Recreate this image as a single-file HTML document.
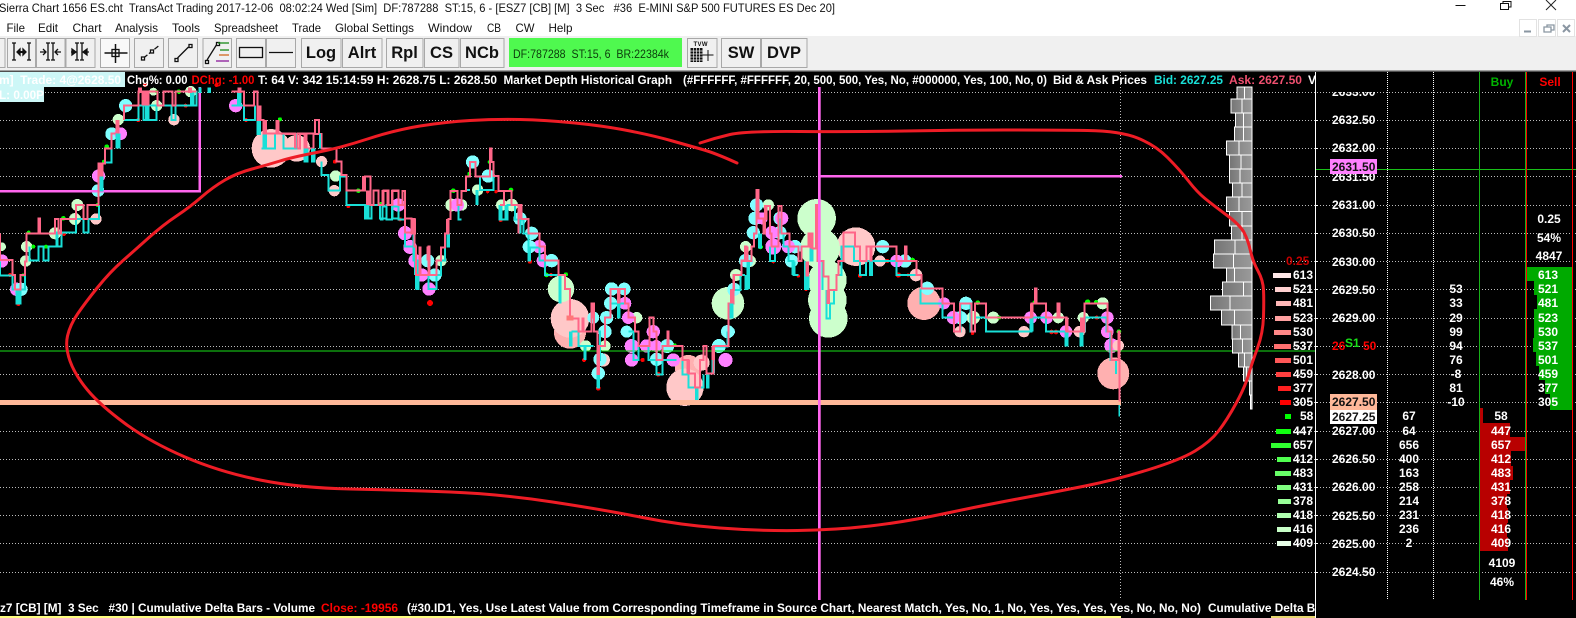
<!DOCTYPE html>
<html><head><meta charset="utf-8"><title>Sierra Chart</title>
<style>
html,body{margin:0;padding:0;background:#000;width:1576px;height:618px;overflow:hidden}
svg{position:absolute;left:0;top:0;display:block}
text{font-family:"Liberation Sans",sans-serif;white-space:pre}
.b{font-weight:bold;font-size:12px;fill:#fff}
.m{text-anchor:middle}
.t{font-size:12px;fill:#111}
.k{font-weight:bold;font-size:16.5px;fill:#111;text-anchor:middle}
.btn{fill:#f0f0f0;stroke:#a8a8a8;stroke-width:1}
.p{fill:none;stroke:#ff6688;stroke-width:6}
.c{fill:none;stroke:#19e0d8;stroke-width:6}
.cy circle{fill:#80ffff}.mg circle{fill:#ff80ff}.gr circle{fill:#ccffcc}.pk circle{fill:#ffc8c8}.pd circle{fill:#ffb0b0}
.rd circle{fill:#f00}.gd circle{fill:#0f0}
</style></head><body>
<svg width="1576" height="618" viewBox="0 0 1576 618" xmlns="http://www.w3.org/2000/svg">
<defs>
<clipPath id="cl"><rect x="0" y="72" width="1315" height="546"/></clipPath>
<clipPath id="ax"><rect x="1316" y="92" width="100" height="40"/></clipPath>
<linearGradient id="g1" x1="0" x2="1"><stop offset="0" stop-color="#757575"/><stop offset="1" stop-color="#8a8a8a"/></linearGradient>
<linearGradient id="g2" x1="0" x2="1"><stop offset="0" stop-color="#8a8a8a"/><stop offset="1" stop-color="#9a9a9a"/></linearGradient>
</defs>

<rect x="0" y="0" width="1576" height="36" fill="#fff"/>
<rect x="0" y="36" width="1576" height="34" fill="#f0f0f0"/>
<rect x="0" y="70" width="1576" height="1.5" fill="#a0a0a0"/>
<rect x="0" y="71.5" width="1576" height="547" fill="#000"/>

<!-- title -->
<text class="t" x="-1" y="12" textLength="836" lengthAdjust="spacingAndGlyphs">Sierra Chart 1656 ES.cht  TransAct Trading 2017-12-06  08:02:24 Wed [Sim]  DF:787288  ST:15, 6 - [ESZ7 [CB] [M]  3 Sec   #36  E-MINI S&amp;P 500 FUTURES ES Dec 20]</text>
<path d="M1455.500 5.500H1465.500" fill="none" stroke="#111"/>
<path d="M1503 3.500V1.500H1511V7H1509" fill="none" stroke="#111"/>
<rect x="1500.500" y="3.500" width="8" height="6" fill="#fff" stroke="#111"/>
<path d="M1546 0L1556 10M1556 0L1546 10" stroke="#222" fill="none"/>
<g fill="#fff" stroke="#e2e2e2"><rect x="1519.500" y="19.500" width="17" height="17"/><rect x="1538.500" y="19.500" width="17" height="17"/><rect x="1557.500" y="19.500" width="17" height="17"/></g>
<path d="M1524 31.500H1531" stroke="#8a96a2" stroke-width="2"/>
<path d="M1544 27h7v5h-7zM1547 27v-2h7v5h-3" fill="none" stroke="#8a96a2" stroke-width="1.300"/>
<path d="M1563 25l7 7M1570 25l-7 7" stroke="#8a96a2" stroke-width="2"/>

<!-- menu -->
<text class="t" x="6.500" y="32" textLength="18.500" lengthAdjust="spacingAndGlyphs">File</text>
<text class="t" x="38" y="32" textLength="20" lengthAdjust="spacingAndGlyphs">Edit</text>
<text class="t" x="72.500" y="32" textLength="29" lengthAdjust="spacingAndGlyphs">Chart</text>
<text class="t" x="115" y="32" textLength="43" lengthAdjust="spacingAndGlyphs">Analysis</text>
<text class="t" x="172" y="32" textLength="28" lengthAdjust="spacingAndGlyphs">Tools</text>
<text class="t" x="214" y="32" textLength="64" lengthAdjust="spacingAndGlyphs">Spreadsheet</text>
<text class="t" x="292" y="32" textLength="29" lengthAdjust="spacingAndGlyphs">Trade</text>
<text class="t" x="335" y="32" textLength="79" lengthAdjust="spacingAndGlyphs">Global Settings</text>
<text class="t" x="428" y="32" textLength="44" lengthAdjust="spacingAndGlyphs">Window</text>
<text class="t" x="487" y="32" textLength="14" lengthAdjust="spacingAndGlyphs">CB</text>
<text class="t" x="515.500" y="32" textLength="19" lengthAdjust="spacingAndGlyphs">CW</text>
<text class="t" x="548.500" y="32" textLength="24" lengthAdjust="spacingAndGlyphs">Help</text>

<!-- toolbar buttons -->
<g class="btn">
<rect x="-4.500" y="38.500" width="9.500" height="29"/>
<rect x="7.500" y="38.500" width="28" height="29"/><rect x="36.500" y="38.500" width="28.500" height="29"/><rect x="66" y="38.500" width="29" height="29"/>
<rect x="100.500" y="38.500" width="29" height="29" style="fill:#f8f8f8"/>
<rect x="134.500" y="38.500" width="29" height="29"/><rect x="168.500" y="38.500" width="29" height="29"/><rect x="203" y="38.500" width="28.500" height="29"/>
<rect x="236.500" y="38.500" width="29" height="29"/><rect x="266.500" y="38.500" width="29" height="29"/>
<rect x="301.500" y="38.500" width="39.500" height="29"/><rect x="342.500" y="38.500" width="39.500" height="29"/>
<rect x="386.500" y="38.500" width="36.500" height="29"/><rect x="424.500" y="38.500" width="34.500" height="29"/><rect x="460.500" y="38.500" width="43.500" height="29"/>
<rect x="687.500" y="38.500" width="29.500" height="29"/><rect x="721.500" y="38.500" width="39" height="29"/><rect x="761.500" y="38.500" width="45.500" height="29"/>
</g>
<rect x="509" y="38" width="173" height="29" fill="#4ff94f"/>
<text x="513" y="58" font-size="12" fill="#0c3c0c" textLength="156" lengthAdjust="spacingAndGlyphs">DF:787288  ST:15, 6  BR:22384k</text>
<!-- icons -->
<g fill="none" stroke="#111" stroke-width="1.300">
<path d="M14 43V60M12 60h4M12 43h4M29 43V60M27 60h4M27 43h4"/>
<path d="M17 52H26" stroke-width="2"/><path d="M17 52l3-3v6zM26 52l-3-3v6z" fill="#111"/>
<g transform="translate(1,0)"><path d="M47 43V60M52 43V60M45 60h4M50 60h4M45 43h4M50 43h4M39 52h6M60 52h-6M42 49l3 3-3 3M57 49l-3 3 3 3"/></g>
<g transform="translate(1,0)"><path d="M76 43V60M81 43V60M74 60h4M79 60h4M74 43h4M79 43h4M70 52h6M88 52h-6"/><path d="M75 52l-4-3v6zM82 52l4-3v6z" fill="#111"/></g>
<g transform="translate(1.500,0)"><path d="M103 53H126M114 44V63" stroke-width="1.500"/><rect x="110.500" y="49.500" width="7" height="7"/></g>
<g transform="translate(2.500,0)"><path d="M141 58L156 46" stroke-dasharray="5 2"/><rect x="139" y="57" width="3" height="3" fill="#fff"/><rect x="148" y="50" width="3" height="3" fill="#fff"/></g>
<g transform="translate(2.500,0)"><path d="M175 58L186 47"/><rect x="172.500" y="58.500" width="3" height="3" fill="#fff"/><rect x="186.500" y="44.500" width="3" height="3" fill="#fff"/></g>
<g transform="translate(3,0)"><path d="M204 60L214 44"/><rect x="202.500" y="60.500" width="3" height="3" fill="#fff"/><rect x="213.500" y="42.500" width="3" height="3" fill="#fff"/>
<path d="M215 43H226" stroke="#1a8a1a"/><path d="M217 50H226" stroke="#1a8a1a"/><path d="M216 55H226" stroke="#d2691e"/><path d="M213 61H226" stroke="#8a1a9a"/></g>
<rect x="239.500" y="47.500" width="23" height="10"/>
<path d="M269 52.500H293"/>
</g>
<g fill="#111" transform="translate(2.500,0)">
<text x="691" y="46" font-size="6" font-weight="bold" fill="#111" textLength="14">TVW</text>
<rect x="688" y="48" width="12" height="14"/>
<path d="M700 55H711M705.500 50V61" stroke="#111" fill="none"/>
<path d="M688 51h12M688 54h12M688 57h12M688 60h12M691 48v14M694 48v14M697 48v14" stroke="#f0f0f0" stroke-width=".7" fill="none"/>
</g>
<text class="k" x="321" y="58">Log</text><text class="k" x="362" y="58">Alrt</text><text class="k" x="404.500" y="58">Rpl</text><text class="k" x="441.500" y="58">CS</text><text class="k" x="482" y="58">NCb</text><text class="k" x="741" y="58">SW</text><text class="k" x="784" y="58">DVP</text>

<!-- grid -->
<g stroke="#bcbcbc" stroke-dasharray="1 2" shape-rendering="crispEdges" fill="none">
<path d="M0 92.500H1576M0 120.500H1576M0 148.500H1576M0 176.500H1576M0 205.500H1576M0 233.500H1576M0 261.500H1576M0 289.500H1576M0 318.500H1576M0 346.500H1576M0 374.500H1576M0 402.500H1576M0 431.500H1576M0 459.500H1576M0 487.500H1576M0 515.500H1576M0 543.500H1576M0 572.500H1576"/>
<path d="M1120.500 72V600"/>
<path d="M1387.500 72V599M1433.500 72V599" stroke="#fff" stroke-dasharray="1 1"/>
</g>

<!-- bubbles z12/z6 -->
<g shape-rendering="crispEdges">
<g transform="translate(0,130) scale(.3333)">
<g class="gr"><circle cx="232" cy="225" r="18"/><circle cx="225" cy="267" r="18"/><circle cx="165" cy="310" r="18"/><circle cx="80" cy="350" r="17"/><circle cx="77" cy="393" r="17"/><circle cx="5" cy="350" r="13"/><circle cx="1007" cy="138" r="17"/></g>
<g class="mg"><circle cx="5" cy="393" r="20"/><circle cx="50" cy="478" r="20"/><circle cx="296" cy="138" r="20"/><circle cx="1195" cy="225" r="20"/><circle cx="1215" cy="310" r="21"/><circle cx="1230" cy="352" r="20"/><circle cx="1245" cy="393" r="20"/></g>
<g class="cy"><circle cx="63" cy="478" r="20"/><circle cx="294" cy="182" r="19"/><circle cx="335" cy="12" r="19"/></g>
<g class="pk"><circle cx="288" cy="267" r="17"/><circle cx="1003" cy="182" r="17"/><circle cx="965" cy="95" r="17"/><circle cx="813" cy="55" r="58"/><circle cx="890" cy="55" r="40"/></g>
</g>
<g transform="translate(0,85) scale(.3333)">
<g class="cy"><circle cx="377" cy="62" r="20"/><circle cx="335" cy="146" r="19"/></g>
<g class="mg"><circle cx="362" cy="146" r="19"/><circle cx="707" cy="62" r="20"/></g>
<g class="gr"><circle cx="355" cy="104" r="17"/><circle cx="470" cy="62" r="17"/><circle cx="460" cy="20" r="12"/><circle cx="572" cy="20" r="17"/></g>
<g class="pk"><circle cx="522" cy="104" r="17"/></g>
</g>
<g transform="translate(380,140) scale(.3333)">
<g class="pd"><circle cx="570" cy="578" r="48"/><circle cx="925" cy="685" r="40"/></g>
<g class="pk"><circle cx="570" cy="535" r="58"/><circle cx="915" cy="742" r="56"/><circle cx="670" cy="660" r="20"/><circle cx="965" cy="668" r="24"/></g>
<g class="gr"><circle cx="543" cy="447" r="40"/><circle cx="1044" cy="490" r="49"/><circle cx="215" cy="195" r="19"/><circle cx="245" cy="195" r="17"/><circle cx="183" cy="362" r="17"/><circle cx="293" cy="150" r="17"/><circle cx="395" cy="195" r="19"/><circle cx="365" cy="195" r="17"/><circle cx="770" cy="533" r="17"/><circle cx="675" cy="618" r="17"/><circle cx="617" cy="618" r="17"/><circle cx="1097" cy="320" r="17"/><circle cx="1068" cy="405" r="17"/></g>
<g class="mg"><circle cx="55" cy="195" r="20"/><circle cx="232" cy="195" r="20"/><circle cx="75" cy="278" r="20"/><circle cx="90" cy="320" r="20"/><circle cx="105" cy="362" r="20"/><circle cx="125" cy="405" r="20"/><circle cx="147" cy="447" r="20"/><circle cx="478" cy="320" r="20"/><circle cx="490" cy="362" r="20"/><circle cx="735" cy="490" r="19"/><circle cx="745" cy="533" r="19"/><circle cx="820" cy="575" r="20"/><circle cx="755" cy="618" r="21"/><circle cx="755" cy="660" r="20"/><circle cx="800" cy="618" r="20"/><circle cx="880" cy="660" r="20"/><circle cx="1037" cy="660" r="21"/><circle cx="829" cy="618" r="18"/></g>
<g class="cy"><circle cx="278" cy="66" r="20"/><circle cx="325" cy="108" r="20"/><circle cx="420" cy="236" r="20"/><circle cx="455" cy="280" r="20"/><circle cx="448" cy="320" r="20"/><circle cx="515" cy="362" r="20"/><circle cx="655" cy="700" r="20"/><circle cx="660" cy="658" r="20"/><circle cx="680" cy="533" r="20"/><circle cx="675" cy="575" r="20"/><circle cx="695" cy="447" r="20"/><circle cx="733" cy="447" r="19"/><circle cx="692" cy="490" r="20"/><circle cx="1043" cy="575" r="20"/><circle cx="1017" cy="618" r="21"/><circle cx="862" cy="618" r="21"/><circle cx="830" cy="658" r="20"/><circle cx="740" cy="575" r="18"/><circle cx="640" cy="533" r="18"/><circle cx="143" cy="362" r="20"/><circle cx="165" cy="405" r="20"/><circle cx="1062" cy="448" r="20"/><circle cx="1097" cy="362" r="20"/></g>
</g>
<g transform="translate(730,180) scale(.3333)">
<g class="pk"><circle cx="378" cy="200" r="58"/></g>
<g class="gr"><circle cx="260" cy="115" r="58"/><circle cx="270" cy="205" r="60"/><circle cx="292" cy="300" r="58"/><circle cx="292" cy="360" r="58"/><circle cx="295" cy="415" r="58"/><circle cx="115" cy="75" r="17"/><circle cx="47" cy="200" r="17"/><circle cx="18" cy="285" r="18"/><circle cx="60" cy="243" r="18"/><circle cx="730" cy="413" r="20"/><circle cx="790" cy="413" r="18"/><circle cx="985" cy="413" r="17"/><circle cx="1060" cy="413" r="17"/><circle cx="1118" cy="370" r="18"/></g>
<g class="pd"><circle cx="582" cy="370" r="50"/><circle cx="1150" cy="580" r="48"/></g>
<g class="cy"><circle cx="80" cy="75" r="20"/><circle cx="75" cy="115" r="20"/><circle cx="70" cy="158" r="20"/><circle cx="150" cy="158" r="20"/><circle cx="150" cy="115" r="20"/><circle cx="50" cy="243" r="20"/><circle cx="195" cy="200" r="20"/><circle cx="185" cy="243" r="20"/><circle cx="458" cy="200" r="20"/><circle cx="525" cy="243" r="20"/><circle cx="592" cy="325" r="20"/><circle cx="708" cy="370" r="20"/><circle cx="692" cy="413" r="20"/><circle cx="0" cy="455" r="15"/><circle cx="10" cy="330" r="18"/></g>
<g class="mg"><circle cx="155" cy="115" r="20"/><circle cx="125" cy="158" r="20"/><circle cx="130" cy="200" r="24"/><circle cx="175" cy="200" r="20"/><circle cx="500" cy="243" r="19"/><circle cx="642" cy="370" r="18"/><circle cx="670" cy="413" r="20"/><circle cx="902" cy="413" r="19"/><circle cx="950" cy="413" r="19"/><circle cx="1008" cy="455" r="19"/><circle cx="1132" cy="413" r="19"/><circle cx="1132" cy="455" r="19"/><circle cx="1145" cy="497" r="22"/><circle cx="0" cy="540" r="8"/><circle cx="95" cy="115" r="18"/></g>
<g class="pk"><circle cx="450" cy="243" r="17"/><circle cx="558" cy="285" r="19"/><circle cx="690" cy="455" r="17"/><circle cx="882" cy="455" r="17"/><circle cx="1048" cy="455" r="17"/><circle cx="1165" cy="497" r="17"/></g>
</g>

<!-- salmon level + pink levels -->
<rect x="0" y="400" width="1121" height="5" fill="#ffb899"/>
<path d="M0 191H199.500V87" fill="none" stroke="#ff66ee" stroke-width="2.500"/>
<rect x="820" y="175" width="302" height="2.500" fill="#ff66ee"/>
<rect x="0" y="350.500" width="1315" height="1" fill="#18e018"/>

<!-- step lines -->
<g transform="translate(0,130) scale(.3333)">
<g class="rd"><circle cx="1045" cy="228" r="6"/><circle cx="1200" cy="268" r="6"/><circle cx="55" cy="522" r="6"/><circle cx="30" cy="435" r="6"/><circle cx="192" cy="312" r="6"/><circle cx="1005" cy="95" r="6"/></g>
<g class="gd"><circle cx="86" cy="308" r="6"/><circle cx="190" cy="265" r="7"/><circle cx="293" cy="225" r="6"/><circle cx="312" cy="95" r="6"/><circle cx="320" cy="50" r="7"/><circle cx="1075" cy="182" r="7"/><circle cx="1143" cy="222" r="6"/><circle cx="138" cy="350" r="6"/><circle cx="100" cy="350" r="6"/><circle cx="70" cy="435" r="5"/></g>
<path class="c" d="M0,395V437H38V478H50V520H62V478H75V437M88,350V392H115V350H130V392H146V350H170V308H185V350H172V308H228V267H250V308H265V267H297V225M318,97H335V55M965,95V135H985V182H1020V140H1040V225H1095V265H1115V225H1140V265H1160V225H1178V265H1195M1215,310V350H1240V310M1245,350V435"/>
<path d="M304,140V185M1102,225V265M1252,435V480M56,478V520" stroke="#19e0d8" stroke-width="12" fill="none"/>
<path class="p" d="M0,310V390H38V435H45V478H62V435H75V395H80V310H115V265H120V310H150H165V267H175V310H183V267H228V225H250V267H262V225H295V182V100H315V55H335V10H355M845,12H890V55H900V12H920V55H940V12H965V55H985H1010V95H1025V135H1040V182H1095V140H1112V225H1120V182H1135V225H1150V182H1165V225H1178V182H1195V225H1215V182V265H1235V310H1245V265"/>
<path d="M304,98V140M1092,138V182M1104,182V225" stroke="#ff6688" stroke-width="12" fill="none"/>
</g>
<g transform="translate(0,85) scale(.3333)">
<g class="rd"><circle cx="415" cy="105" r="6"/><circle cx="557" cy="62" r="6"/><circle cx="738" cy="105" r="6"/><circle cx="435" cy="0" r="6"/><circle cx="650" cy="0" r="6"/></g>
<g class="gd"><circle cx="537" cy="20" r="7"/><circle cx="470" cy="20" r="5"/><circle cx="418" cy="20" r="5"/><circle cx="840" cy="103" r="6"/></g>
<path class="c" d="M372,105H415V62H470V105H430V20M472,62H515V105H527V62H590V20H570M695,62H732V105H765V62M490,20V62M785,190H825V145M850,145V190H890V145M960,145V190"/>
<path d="M442,20V105M577,20V62M718,20V62M794,145V190M354,145V190M918,190V232M940,190V232M776,105V150" stroke="#19e0d8" stroke-width="14" fill="none"/>
<path d="M628,8V24M600,8V24" stroke="#19e0d8" stroke-width="10" fill="none"/>
<path class="p" d="M372,105V62H415V20H472V62H490V20H517V62H527V20H590M695,20H732V62H762V20H772V105H790V145H885V190M893,190V145H945V105H957V145"/>
<path d="M430,20V62M442,20V62M718,8V24M420,8V24M778,62V105M795,105V145M832,105V145M917,150V190M352,105V146M570,8V24" stroke="#ff6688" stroke-width="12" fill="none"/>
</g>
<g transform="translate(380,140) scale(.3333)">
<g class="rd"><circle cx="150" cy="489" r="9"/><circle cx="60" cy="238" r="6"/><circle cx="362" cy="240" r="6"/><circle cx="450" cy="365" r="6"/><circle cx="513" cy="405" r="6"/><circle cx="612" cy="660" r="6"/><circle cx="655" cy="745" r="7"/><circle cx="835" cy="703" r="7"/><circle cx="788" cy="660" r="6"/><circle cx="323" cy="155" r="5"/><circle cx="348" cy="155" r="5"/></g>
<g class="gd"><circle cx="500" cy="405" r="7"/><circle cx="220" cy="152" r="7"/><circle cx="393" cy="150" r="7"/><circle cx="558" cy="403" r="6"/><circle cx="268" cy="102" r="6"/><circle cx="328" cy="66" r="5"/><circle cx="885" cy="615" r="5"/></g>
<path class="c" d="M0,238H8V200H20V238H36V200H55V238H75V320H100V362H118V405H145V447H170V405H183V362H195V322M235,195V238H245M258,150H270M300,108V150H340V108M358,195V238H383V195H405V238H430V280H445V322H478V362H495V405H535M575,575H595V618H640M640,575H660V660H655M675,618V533H692V490H735M745,575H760V660H775V618H805V660H830V703H848V660H890M908,660V703H925V742H970V703M1000,620H1043V575"/>
<path d="M110,362V447M205,280V322M291,150V195M362,195V237M378,195V237M420,237V280M448,322V365M540,405V490M572,575V620M615,618V660M655,700V745M716,490V535M1000,660V700M983,700V745M950,742V780M1055,490V533M1105,362V447" stroke="#19e0d8" stroke-width="10" fill="none"/>
<path class="p" d="M0,195H8V153H22V195H36V153H55V195H68V153H75V278H100V237H104V320H108V405H118V322H122V405H145V320H149V405H170V362H183V322H195V280H205V237H212V153H232V195H245V153H258V110H270V66H286V110H330V25H334V66H340V108H355V153H372V195H360M372,195V153H395V195H415V280M415,195H425V237H445V280H478V320H495V362H535V405H555V447H570V535H595V575H607V535H610V575H635V490H642V575H652V700H655V618H675V533H692V447H735V490H745V533H765V575H775V618H808V533H820V575H830V660H848V618H862V575H866V618H908V660H925V700H945V742H960V660H970V618H980V700H1000V618H1045V490H1060V405H1085V362H1100V320"/>
<path d="M99,237V278M332,25V66M422,195V237M203,237V280M716,447V490M640,490V535M655,618V705M1000,618V660M925,660V700M1057,447V490M1100,320V362M145,320V362" stroke="#ff6688" stroke-width="10" fill="none"/>
<path d="M560,534H580" stroke="#ff7777" stroke-width="14"/>
</g>
<g transform="translate(730,180) scale(.3333)">
<g class="rd"><circle cx="130" cy="245" r="5"/><circle cx="205" cy="288" r="5"/><circle cx="390" cy="287" r="6"/><circle cx="472" cy="243" r="6"/><circle cx="505" cy="285" r="8"/><circle cx="535" cy="285" r="5"/><circle cx="728" cy="460" r="5"/><circle cx="965" cy="456" r="7"/><circle cx="978" cy="456" r="7"/><circle cx="1100" cy="413" r="6"/><circle cx="228" cy="328" r="5"/></g>
<g class="gd"><circle cx="92" cy="201" r="7"/><circle cx="548" cy="240" r="7"/><circle cx="743" cy="368" r="7"/><circle cx="808" cy="413" r="6"/><circle cx="1073" cy="366" r="8"/><circle cx="1098" cy="366" r="6"/><circle cx="1167" cy="455" r="7"/><circle cx="912" cy="366" r="4"/></g>
<path class="c" d="M0,330H32V285H45M120,200V243H135V200M160,160V200H175V243H190V285H205M225,330V243M278,243V330M290,330V415H300V370H312V330H320V285H335V200H372V243H390V285H408V243H500V285H560M572,325V370H638V413H672V455H692V370M722,370V455H735V413H768V455H905V413H948V455H1065V413H1130V455H1142V540H1158V582"/>
<path d="M50,285V330M90,160V205M5,370V415M190,245V285M245,205V245M232,285V330M423,245V288M1009,455V500M1055,455V500M905,413V455M150,115V160" stroke="#19e0d8" stroke-width="12" fill="none"/>
<path d="M1168,675V710" stroke="#19e0d8" stroke-width="5"/>
<path class="p" d="M5,370V330H12V285H35V243H45V200H50V243H65V200H72V160H80V30H85V115H100V160H105V78H120V160H125V200H145V78H155V160H178V200H205V243H215V200H235V160H248V205H258V75H262V243H280V290H295V330H320V285H325V243H340V158H375V200H390V243H410V200H500V243H525V200H530V243H560V285H575V325H638V370H672V455H690V370H725V455H735V370H768V413H905V370H915V325H920V370H948V413H985V370H988V413H1010V455H1063V370H1132V455H1145V540H1165V455H1168V665"/>
<path d="M5,330V370M48,200V245M108,75V120M243,160V205M232,245V290M423,200V245M905,370V413M985,368V415M1010,413V455M1055,413V455M82,30V80M295,330V372" stroke="#ff6688" stroke-width="10" fill="none"/>
</g>
</g>

<!-- magenta vertical -->
<rect x="818" y="87" width="2.700" height="513" fill="#ff66ee"/>

<!-- volume profile -->
<g stroke="#fff" stroke-width="1.300" shape-rendering="crispEdges">
<rect x="1237" y="87" width="7.500" height="12.500" fill="url(#g1)"/><rect x="1244.500" y="87" width="7.500" height="12.500" fill="url(#g2)"/>
<rect x="1231" y="99" width="11" height="14" fill="url(#g1)"/><rect x="1242" y="99" width="10" height="14" fill="url(#g2)"/>
<rect x="1235.500" y="113" width="8" height="14" fill="url(#g1)"/><rect x="1243.500" y="113" width="8.500" height="14" fill="url(#g2)"/>
<rect x="1234.500" y="127" width="9" height="14" fill="url(#g1)"/><rect x="1243.500" y="127" width="8.500" height="14" fill="url(#g2)"/>
<rect x="1226.500" y="141" width="12.500" height="14" fill="url(#g1)"/><rect x="1239" y="141" width="13" height="14" fill="url(#g2)"/>
<rect x="1229.500" y="155" width="11.500" height="14" fill="url(#g1)"/><rect x="1241" y="155" width="11" height="14" fill="url(#g2)"/>
<rect x="1229.500" y="169" width="10.500" height="14" fill="url(#g1)"/><rect x="1240" y="169" width="12" height="14" fill="url(#g2)"/>
<rect x="1232.500" y="183" width="9.500" height="14" fill="url(#g1)"/><rect x="1242" y="183" width="10" height="14" fill="url(#g2)"/>
<rect x="1226.500" y="197" width="12.500" height="14.500" fill="url(#g1)"/><rect x="1239" y="197" width="13" height="14.500" fill="url(#g2)"/>
<rect x="1229.500" y="211.500" width="12.500" height="14.500" fill="url(#g1)"/><rect x="1242" y="211.500" width="10" height="14.500" fill="url(#g2)"/>
<rect x="1231.500" y="226" width="10.500" height="14" fill="url(#g1)"/><rect x="1242" y="226" width="10" height="14" fill="url(#g2)"/>
<rect x="1214.500" y="240" width="20.500" height="14" fill="url(#g1)"/><rect x="1235" y="240" width="17" height="14" fill="url(#g2)"/>
<rect x="1213.500" y="254" width="20" height="14" fill="url(#g1)"/><rect x="1233.500" y="254" width="18.500" height="14" fill="url(#g2)"/>
<rect x="1226.500" y="268" width="8" height="14" fill="url(#g1)"/><rect x="1234.500" y="268" width="17.500" height="14" fill="url(#g2)"/>
<rect x="1222.500" y="282" width="21" height="14" fill="url(#g1)"/><rect x="1243.500" y="282" width="8.500" height="14" fill="url(#g2)"/>
<rect x="1210.500" y="296" width="19.500" height="14" fill="url(#g1)"/><rect x="1230" y="296" width="22" height="14" fill="url(#g2)"/>
<rect x="1221.500" y="310" width="13" height="15" fill="url(#g1)"/><rect x="1234.500" y="310" width="17.500" height="15" fill="url(#g2)"/>
<rect x="1232" y="325" width="8.500" height="14" fill="url(#g1)"/><rect x="1240.500" y="325" width="11.500" height="14" fill="url(#g2)"/>
<rect x="1232.500" y="339" width="10" height="14" fill="url(#g1)"/><rect x="1242.500" y="339" width="9.500" height="14" fill="url(#g2)"/>
<rect x="1238.500" y="353" width="6" height="14" fill="url(#g1)"/><rect x="1244.500" y="353" width="7.500" height="14" fill="url(#g2)"/>
<rect x="1243.500" y="367" width="3" height="14" fill="url(#g1)"/><rect x="1246.500" y="367" width="5.500" height="14" fill="url(#g2)"/>
<rect x="1249.500" y="381" width="2.500" height="14" fill="url(#g2)"/>
<rect x="1250.500" y="395" width="1.500" height="14" fill="#bbb"/>
</g>

<!-- freehand red -->
<path fill="none" stroke="#ee1c25" stroke-width="3" stroke-linecap="round" stroke-linejoin="round" d="M737,163Q715,153 702.500,149.500T672.500,141T630,131T575,123T520,119.500T470,120.500T420,126T367.500,139T316.500,152.500T280,161T252,169T225,180T201.500,197T176.500,216T149,237.500T122.500,261T97.500,287.500T77.500,314T67.500,336T70,361T87.500,390T125,423.500T185,457T260,480T350,489T450,492T552.500,502T642.500,517.500T720,528T797.500,530.500T870,526T945,513.500T1020,498.500T1085,486T1147.500,470T1195,451T1218.500,431T1236,403.500T1248.500,375T1257.500,348T1263.500,316.500T1263.500,290T1258,271T1250.500,251T1244,232.500T1226.500,215T1205,198.500T1188.500,181T1167.500,157.500T1137.500,138T1087.500,130.500T1005,130T905,131T800,131.500T730,134.500T700,143"/>

<!-- header -->
<rect x="0" y="72" width="125" height="15" fill="#cdf7f7"/><rect x="0" y="87" width="44" height="15" fill="#cdf7f7"/>
<g clip-path="url(#cl)">
<text class="b" x="-1" y="84" textLength="122" lengthAdjust="spacingAndGlyphs">m]  Trade: 4@2628.50</text>
<text class="b" x="-1" y="99" textLength="45" lengthAdjust="spacingAndGlyphs">L: 0.00P</text>
<text class="b" x="127" y="84" textLength="60.500" lengthAdjust="spacingAndGlyphs">Chg%: 0.00</text>
<text class="b" x="191.500" y="84" style="fill:#f00" textLength="63" lengthAdjust="spacingAndGlyphs">DChg: -1.00</text>
<text class="b" x="258" y="84" textLength="239" lengthAdjust="spacingAndGlyphs">T: 64 V: 342 15:14:59 H: 2628.75 L: 2628.50</text>
<text class="b" x="503.500" y="84" textLength="168.500" lengthAdjust="spacingAndGlyphs">Market Depth Historical Graph</text>
<text class="b" x="683" y="84" textLength="364" lengthAdjust="spacingAndGlyphs">(#FFFFFF, #FFFFFF, 20, 500, 500, Yes, No, #000000, Yes, 100, No, 0)</text>
<text class="b" x="1053" y="84" textLength="94" lengthAdjust="spacingAndGlyphs">Bid &amp; Ask Prices</text>
<text class="b" x="1154" y="84" style="fill:#19e0d8" textLength="69" lengthAdjust="spacingAndGlyphs">Bid: 2627.25</text>
<text class="b" x="1229" y="84" style="fill:#f05070" textLength="73" lengthAdjust="spacingAndGlyphs">Ask: 2627.50</text>
<text class="b" x="1308" y="84">V</text>
<text class="b" x="0" y="612" textLength="315" lengthAdjust="spacingAndGlyphs">z7 [CB] [M]  3 Sec   #30 | Cumulative Delta Bars - Volume</text>
<text class="b" x="321" y="612" style="fill:#f00" textLength="77" lengthAdjust="spacingAndGlyphs">Close: -19956</text>
<text class="b" x="407" y="612" textLength="794" lengthAdjust="spacingAndGlyphs">(#30.ID1, Yes, Use Latest Value from Corresponding Timeframe in Source Chart, Nearest Match, Yes, No, 1, No, Yes, Yes, Yes, Yes, No, No, No)</text>
<text class="b" x="1208" y="612" textLength="125" lengthAdjust="spacingAndGlyphs">Cumulative Delta Bars</text>
</g>
<rect x="0" y="616" width="1121" height="2" fill="#ffff80"/>
<rect x="1271" y="616" width="44" height="2" fill="#e8d870"/>

<!-- axis and columns -->
<rect x="1315" y="72" width="1" height="546" fill="#fff"/>
<path d="M1316 120.500h2M1316 148.500h2M1316 176.500h2M1316 205.500h2M1316 233.500h2M1316 261.500h2M1316 289.500h2M1316 318.500h2M1316 346.500h2M1316 374.500h2M1316 402.500h2M1316 431.500h2M1316 459.500h2M1316 487.500h2M1316 515.500h2M1316 543.500h2M1316 572.500h2" stroke="#fff"/>
<rect x="1316" y="169" width="260" height="1" fill="#18c018"/>

<!-- sell / buy bars -->
<g fill="#00aa00">
<rect x="1527" y="267" width="45" height="14"/><rect x="1534" y="281" width="38" height="14"/><rect x="1537" y="295" width="35" height="14"/><rect x="1534" y="309" width="38" height="15"/><rect x="1534" y="324" width="38" height="14"/><rect x="1533" y="338" width="39" height="14"/><rect x="1536" y="352" width="36" height="14"/><rect x="1539" y="366" width="33" height="14"/><rect x="1545" y="380" width="27" height="14"/><rect x="1550" y="394" width="22" height="16"/>
</g>
<g fill="#b80000">
<rect x="1480" y="408" width="3" height="15"/>
<rect x="1480" y="423" width="30" height="15"/><rect x="1480" y="437" width="45" height="14"/><rect x="1480" y="451" width="31" height="15"/><rect x="1480" y="466" width="33" height="14"/><rect x="1480" y="480" width="30" height="14"/><rect x="1480" y="494" width="27" height="14"/><rect x="1480" y="508" width="28" height="15"/><rect x="1480" y="523" width="27" height="14"/><rect x="1480" y="537" width="28" height="14"/>
</g>
<path d="M1479.500 72V600" stroke="#18b018"/>
<path d="M1525.500 72V600" stroke="#18b018"/>
<path d="M1526.500 72V600M1572.500 72V600" stroke="#f00"/>
<text class="b m" x="1502" y="86" style="fill:#00b400">Buy</text>
<text class="b m" x="1550" y="86" style="fill:#f00">Sell</text>

<!-- price labels -->
<g clip-path="url(#ax)"><text class="b" x="1332" y="96">2633.00</text></g>
<text class="b" x="1332" y="124">2632.50</text><text class="b" x="1332" y="152">2632.00</text><text class="b" x="1332" y="181">2631.50</text><text class="b" x="1332" y="209">2631.00</text><text class="b" x="1332" y="237">2630.50</text><text class="b" x="1332" y="266">2630.00</text><text class="b" x="1332" y="294">2629.50</text><text class="b" x="1332" y="322">2629.00</text><text class="b" x="1332" y="379">2628.00</text><text class="b" x="1332" y="435">2627.00</text><text class="b" x="1332" y="463">2626.50</text><text class="b" x="1332" y="491">2626.00</text><text class="b" x="1332" y="520">2625.50</text><text class="b" x="1332" y="548">2625.00</text><text class="b" x="1332" y="576">2624.50</text>
<text class="b" x="1332" y="350" style="fill:#f00">26</text><text class="b" x="1363" y="350" style="fill:#f00">50</text>
<text class="b" x="1345" y="347" style="fill:#18e018">S1</text>
<rect x="1330" y="159" width="47" height="15" fill="#ff80ff"/><text class="b" x="1332" y="171" style="fill:#111">2631.50</text>
<rect x="1330" y="394" width="47" height="16" fill="#ffb899"/><text class="b" x="1332" y="406" style="fill:#111">2627.50</text>
<rect x="1330" y="410" width="47" height="14" fill="#fff"/><text class="b" x="1332" y="421" style="fill:#111">2627.25</text>

<text class="b" x="1286" y="265" style="fill:#c80000">0.25</text>

<!-- ladder bars -->
<g shape-rendering="crispEdges">
<rect x="1273" y="273" width="18" height="5" fill="#ffe8e8"/><rect x="1275" y="287" width="16" height="5" fill="#ffd0d0"/><rect x="1276" y="301" width="15" height="5" fill="#ffb8b8"/><rect x="1275" y="316" width="16" height="5" fill="#ffa0a0"/><rect x="1274" y="330" width="17" height="5" fill="#ff8888"/><rect x="1274" y="344" width="17" height="5" fill="#ff7070"/><rect x="1275" y="358" width="16" height="5" fill="#ff5858"/><rect x="1276" y="372" width="15" height="5" fill="#ff4040"/><rect x="1278" y="386" width="13" height="5" fill="#ff2020"/><rect x="1280" y="400" width="11" height="5" fill="#f00"/>
<rect x="1285" y="414" width="6" height="5" fill="#0f0"/>
<rect x="1276" y="429" width="15" height="5" fill="#10ff10"/><rect x="1271" y="443" width="20" height="5" fill="#30ff30"/><rect x="1277" y="457" width="14" height="5" fill="#50ff50"/><rect x="1275" y="471" width="16" height="5" fill="#68ff68"/><rect x="1277" y="485" width="14" height="5" fill="#80ff80"/><rect x="1278" y="499" width="13" height="5" fill="#98ff98"/><rect x="1277" y="513" width="14" height="5" fill="#b0ffb0"/><rect x="1277" y="527" width="14" height="5" fill="#c8ffc8"/><rect x="1277" y="541" width="14" height="5" fill="#e8ffe8"/>
</g>
<text class="b" x="1293" y="279">613</text><text class="b" x="1293" y="293">521</text><text class="b" x="1293" y="307">481</text><text class="b" x="1293" y="322">523</text><text class="b" x="1293" y="336">530</text><text class="b" x="1293" y="350">537</text><text class="b" x="1293" y="364">501</text><text class="b" x="1293" y="378">459</text><text class="b" x="1293" y="392">377</text><text class="b" x="1293" y="406">305</text><text class="b" x="1300" y="420">58</text><text class="b" x="1293" y="435">447</text><text class="b" x="1293" y="449">657</text><text class="b" x="1293" y="463">412</text><text class="b" x="1293" y="477">483</text><text class="b" x="1293" y="491">431</text><text class="b" x="1293" y="505">378</text><text class="b" x="1293" y="519">418</text><text class="b" x="1293" y="533">416</text><text class="b" x="1293" y="547">409</text>

<!-- columns text -->
<text class="b m" x="1456" y="293">53</text><text class="b m" x="1456" y="307">33</text><text class="b m" x="1456" y="322">29</text><text class="b m" x="1456" y="336">99</text><text class="b m" x="1456" y="350">94</text><text class="b m" x="1456" y="364">76</text><text class="b m" x="1456" y="378">-8</text><text class="b m" x="1456" y="392">81</text><text class="b m" x="1456" y="406">-10</text>
<text class="b m" x="1409" y="420">67</text><text class="b m" x="1409" y="435">64</text><text class="b m" x="1409" y="449">656</text><text class="b m" x="1409" y="463">400</text><text class="b m" x="1409" y="477">163</text><text class="b m" x="1409" y="491">258</text><text class="b m" x="1409" y="505">214</text><text class="b m" x="1409" y="519">231</text><text class="b m" x="1409" y="533">236</text><text class="b m" x="1409" y="547">2</text>
<text class="b m" x="1501" y="420">58</text><text class="b m" x="1501" y="435">447</text><text class="b m" x="1501" y="449">657</text><text class="b m" x="1501" y="463">412</text><text class="b m" x="1501" y="477">483</text><text class="b m" x="1501" y="491">431</text><text class="b m" x="1501" y="505">378</text><text class="b m" x="1501" y="519">418</text><text class="b m" x="1501" y="533">416</text><text class="b m" x="1501" y="547">409</text>
<text class="b m" x="1502" y="567">4109</text><text class="b m" x="1502" y="586">46%</text>
<text class="b m" x="1548" y="279">613</text><text class="b m" x="1548" y="293">521</text><text class="b m" x="1548" y="307">481</text><text class="b m" x="1548" y="322">523</text><text class="b m" x="1548" y="336">530</text><text class="b m" x="1548" y="350">537</text><text class="b m" x="1548" y="364">501</text><text class="b m" x="1548" y="378">459</text><text class="b m" x="1548" y="392">377</text><text class="b m" x="1548" y="406">305</text>
<text class="b m" x="1549" y="223">0.25</text><text class="b m" x="1549" y="242">54%</text><text class="b m" x="1549" y="260">4847</text>
</svg>
</body></html>
